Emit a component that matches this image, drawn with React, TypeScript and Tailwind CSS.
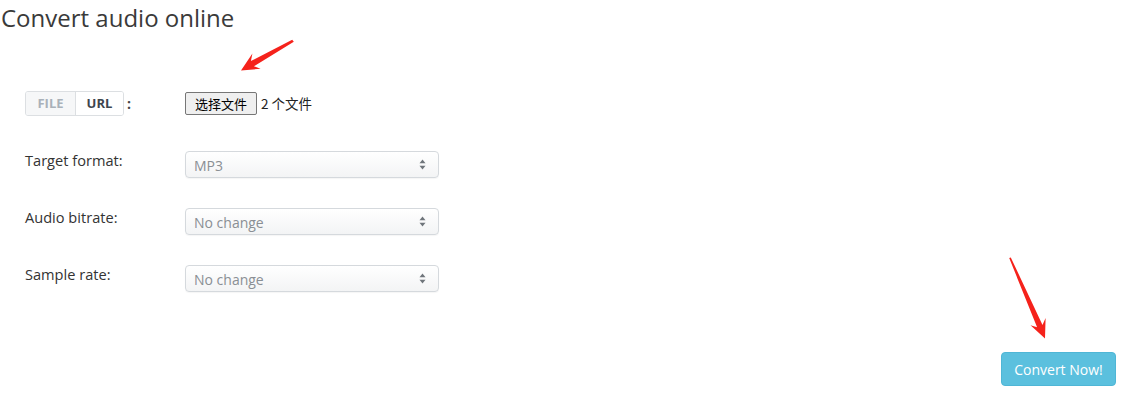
import React from "react";

const font = { fontFamily: '"Open Sans", "Noto Sans CJK SC", sans-serif' };

function SelectBox({ value }: { value: string }) {
  return (
    <div className="flex h-[27px] w-[254px] items-center justify-between rounded-[4px] border border-[#d5d9dd] bg-gradient-to-b from-white to-[#f3f4f5] pl-[8px] pr-[12px] text-[14px] text-[#8a8f94] shadow-[0_1px_1px_rgba(0,0,0,0.04)]">
      <span className="pt-[1px]">{value}</span>
      <svg width="7" height="11" viewBox="0 0 7 11">
        <path d="M3.5 0.5 L6.5 4.2 L0.5 4.2 Z" fill="#6f757b" />
        <path d="M3.5 10.5 L6.5 6.8 L0.5 6.8 Z" fill="#6f757b" />
      </svg>
    </div>
  );
}

function Row({ label, value }: { label: string; value: string }) {
  return (
    <div className="flex h-[57px] items-start">
      <div className="w-[160px] text-[14.6px] leading-[19px] text-[#333]">{label}</div>
      <SelectBox value={value} />
    </div>
  );
}

export default function App() {
  return (
    <div className="relative h-[415px] w-[1133px] overflow-hidden bg-white" style={font}>
      <h1 className="pl-[1px] pt-[2px] text-[24px] leading-[32px] text-[#3a3a3a]">Convert audio online</h1>

      <div className="pl-[25px] pt-[57px]">
        <div className="flex h-[60px] items-start">
          <div className="flex w-[160px] items-center">
            <div className="flex h-[25px] overflow-hidden rounded-[3px] border border-[#dcdfe2] text-[13px] font-bold">
              <div className="flex w-[49px] items-center justify-center bg-[#f6f7f8] text-[#a9b1b9]">FILE</div>
              <div className="flex w-[48px] items-center justify-center border-l border-[#dcdfe2] bg-white text-[#3d454d]">URL</div>
            </div>
            <span className="ml-[3px] text-[14px] font-bold text-[#444]">:</span>
          </div>
          <div className="flex items-center pt-[1px]">
            <div
              className="flex h-[23px] w-[72px] items-center justify-center rounded-[2px] border border-[#767676] bg-[#efefef] text-[13px] text-black"
              style={{ fontFamily: '"Noto Sans CJK SC", sans-serif' }}
            >
              选择文件
            </div>
            <span
              className="ml-[4px] text-[13.5px] text-[#222]"
              style={{ fontFamily: '"Noto Sans CJK SC", sans-serif' }}
            >
              2 个文件
            </span>
          </div>
        </div>
        <Row label="Target format:" value="MP3" />
        <Row label="Audio bitrate:" value="No change" />
        <Row label="Sample rate:" value="No change" />
      </div>

      <div className="flex justify-end pr-[17px] pt-[30px]">
        <div className="flex h-[34px] w-[115px] items-center justify-center rounded-[4px] border border-[#4fb6d6] bg-[#5bc0de] text-[14px] font-medium text-white">
          Convert Now!
        </div>
      </div>

      <svg className="pointer-events-none absolute left-0 top-0" width="1133" height="415">
        <polygon
          points="293.8,41.8 253.9,66.3 260.6,68.8 241,70.5 252.4,53.6 250.9,61.1 292.2,39.8"
          fill="#f5221b"
        />
        <polygon
          points="1009.2,258 1037.1,327.3 1030.5,325.2 1045,338.5 1045.6,318 1042.5,324.9 1010.8,257.5"
          fill="#f5221b"
        />
      </svg>
    </div>
  );
}
